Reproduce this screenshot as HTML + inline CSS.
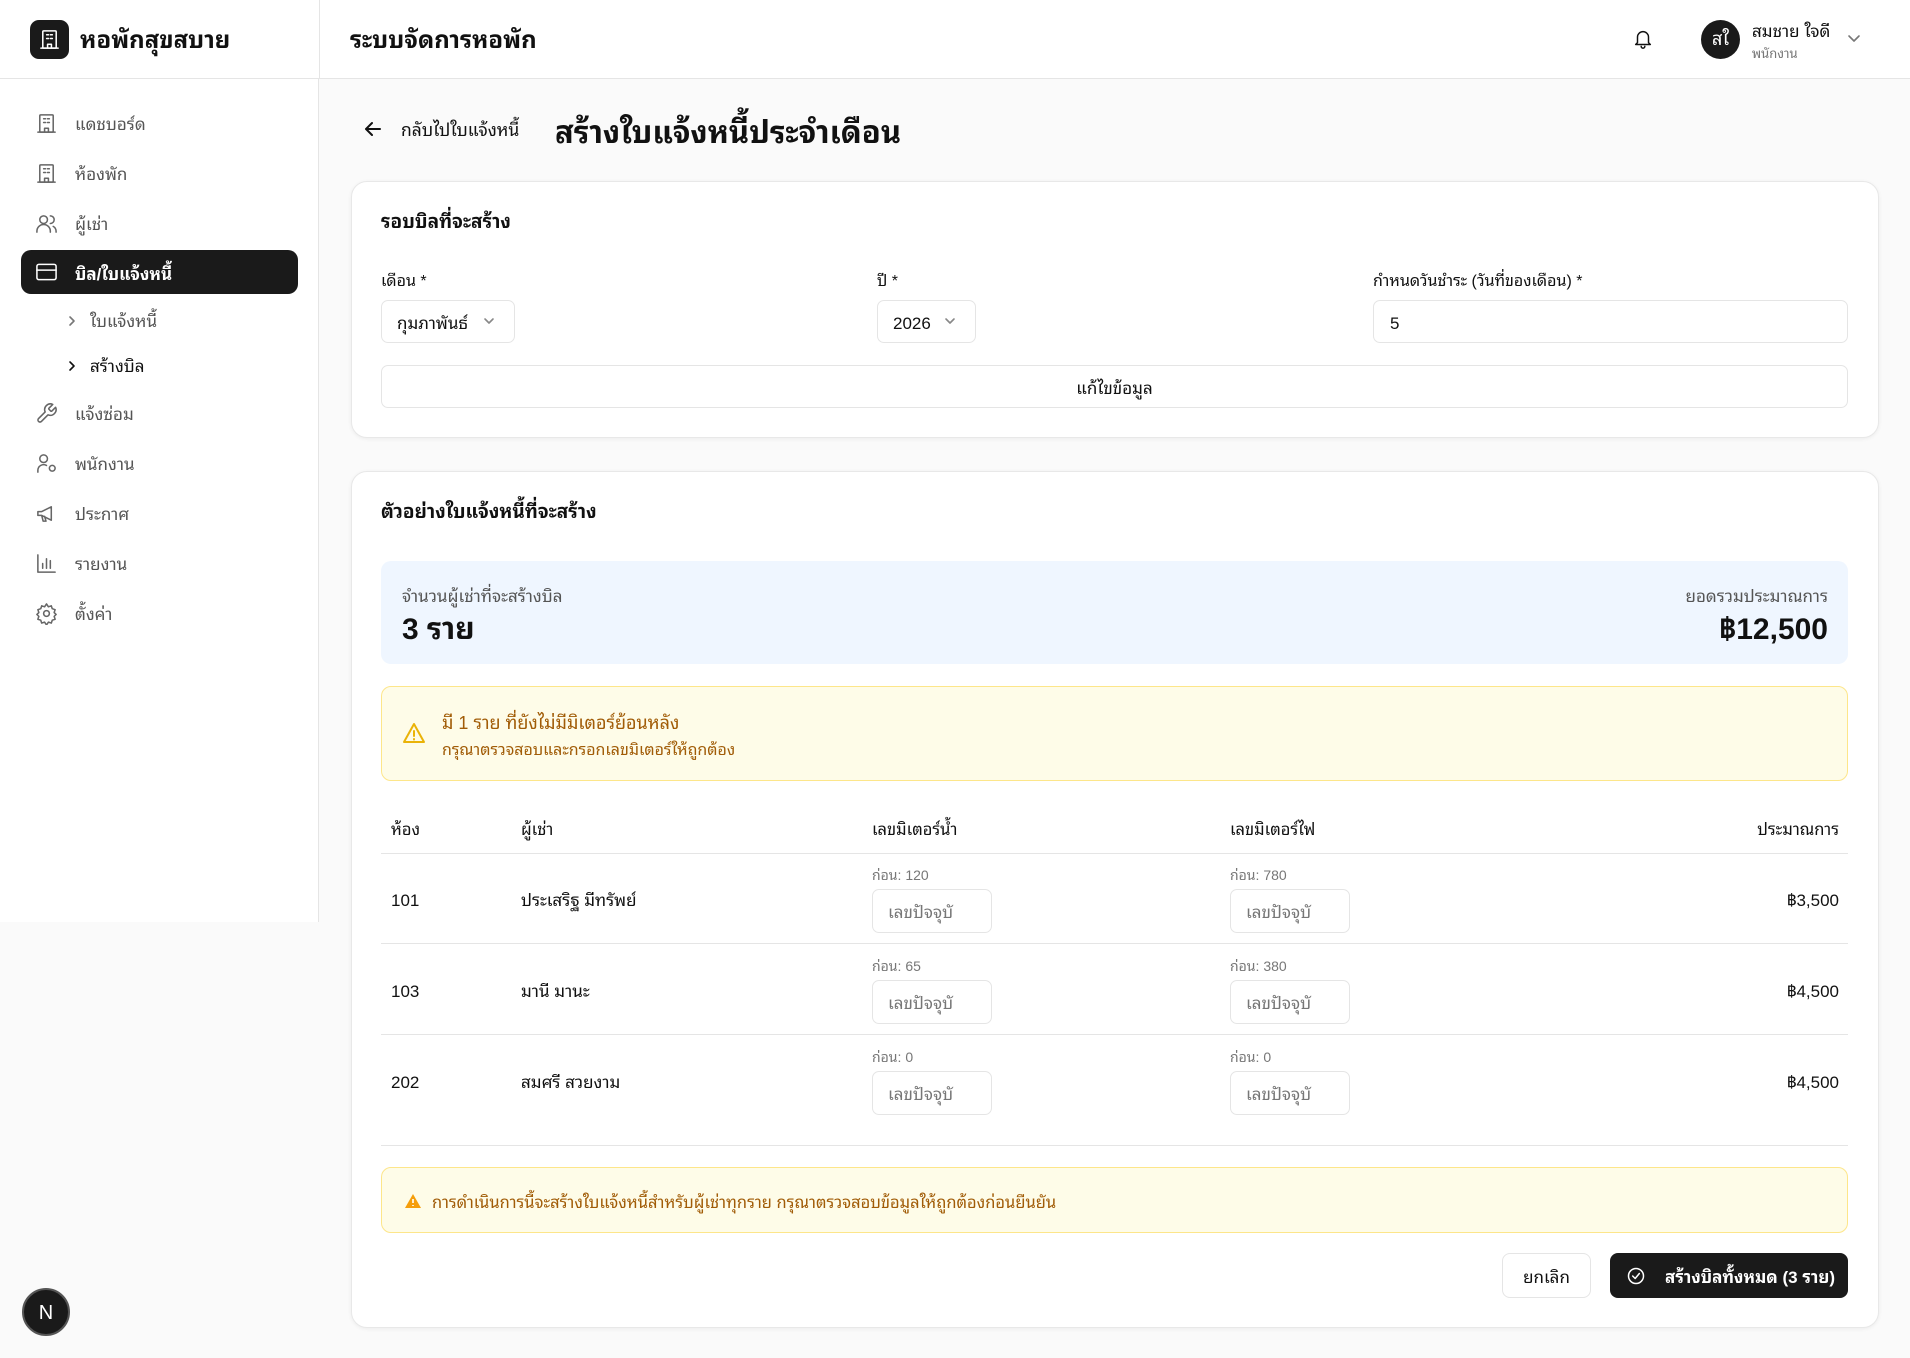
<!DOCTYPE html>
<html><head><meta charset="utf-8"><style>
*{box-sizing:border-box;margin:0;padding:0}
body{width:1910px;height:1358px;background:#fafafa;font-family:"Liberation Sans","Noto Sans Thai Looped","Tahoma","Loma","Garuda","Sawasdee","Norasi","Noto Sans Thai",sans-serif;color:#111;position:relative;overflow:hidden;line-height:1.25}
.a{position:absolute;white-space:nowrap;padding-top:2px}
.ic{position:absolute;fill:none;stroke:currentColor;stroke-width:1.6;stroke-linecap:round;stroke-linejoin:round}
.card{position:absolute;background:#fff;border:1px solid #e8e8e8;border-radius:16px;box-shadow:0 1px 4px rgba(0,0,0,.06)}
.box{position:absolute;border:1px solid #e5e5e5;border-radius:7px;background:#fff}
.nav{color:#555;font-size:17px}
.ph{font-size:17px;color:#777}
.sm{font-size:14px;color:#777}
.hl{position:absolute;left:381px;width:1467px;height:1px;background:#e5e5e5}
</style></head><body>
<div class="a" style="left:0;top:0;width:319px;height:922px;background:#fff;border-right:1px solid #e5e5e5"></div>
<div class="a" style="left:0;top:0;width:1910px;height:79px;background:#fff;border-bottom:1px solid #e5e5e5"></div>
<div class="a" style="left:319px;top:0;width:1px;height:79px;background:#e5e5e5"></div>
<div class="a" style="left:30px;top:20px;width:39px;height:39px;background:#1a1a1a;border-radius:9px"></div>
<svg class="ic" style="left:38px;top:28px;color:#fff" width="23" height="23" viewBox="0 0 24 24"><rect x="5" y="3" width="14" height="18" rx="1"/><path d="M9 7h2M13 7h2M9 11h2M13 11h2M10 21v-4h4v4M3 21h18"/></svg>
<div class="a" style="left:80px;top:24px;font-size:24px;font-weight:bold">หอพักสุขสบาย</div>
<div class="a" style="left:350px;top:24px;font-size:24px;font-weight:bold">ระบบจัดการหอพัก</div>
<svg class="ic" style="left:1632px;top:28px" width="22" height="22" viewBox="0 0 24 24"><path d="M6 16V10a6 6 0 0 1 12 0v6l2 2H4z"/><path d="M10 20a2 2 0 0 0 4 0"/></svg>
<div class="a" style="left:1701px;top:20px;width:39px;height:39px;border-radius:50%;background:#1a1a1a;color:#fff;font-size:18px;text-align:center;line-height:35px">สใ</div>
<div class="a" style="left:1752px;top:19px;font-size:17px">สมชาย ใจดี</div>
<div class="a" style="left:1752px;top:44px;font-size:13px;color:#777">พนักงาน</div>
<svg class="ic" style="left:1847px;top:33px;color:#777" width="14" height="12" viewBox="0 0 14 12"><path d="M2 3l5 5 5-5"/></svg>

<svg class="ic" style="left:35px;top:112px;color:#666" width="23" height="23" viewBox="0 0 24 24"><rect x="5" y="3" width="14" height="18" rx="1"/><path d="M9 7h2M13 7h2M9 11h2M13 11h2M10 21v-4h4v4M3 21h18"/></svg>
<div class="a nav" style="left:75px;top:112px">แดชบอร์ด</div>
<svg class="ic" style="left:35px;top:162px;color:#666" width="23" height="23" viewBox="0 0 24 24"><rect x="5" y="3" width="14" height="18" rx="1"/><path d="M9 7h2M13 7h2M9 11h2M13 11h2M10 21v-4h4v4M3 21h18"/></svg>
<div class="a nav" style="left:75px;top:162px">ห้องพัก</div>
<svg class="ic" style="left:35px;top:212px;color:#666" width="23" height="23" viewBox="0 0 24 24"><circle cx="9" cy="8" r="4"/><path d="M2 21v-1a7 7 0 0 1 14 0v1M16 4a4 4 0 0 1 0 8M22 21v-1a6 6 0 0 0-3-5"/></svg>
<div class="a nav" style="left:75px;top:212px">ผู้เช่า</div>
<div class="a" style="left:21px;top:250px;width:277px;height:44px;background:#1a1a1a;border-radius:10px"></div>
<svg class="ic" style="left:35px;top:262px;color:#fff" width="23" height="20" viewBox="0 0 24 20"><rect x="2" y="2" width="20" height="16" rx="2"/><path d="M2 8h20"/></svg>
<div class="a" style="left:75px;top:262px;font-size:17px;color:#fff;font-weight:bold">บิล/ใบแจ้งหนี้</div>
<svg class="ic" style="left:67px;top:315px;color:#777" width="10" height="12" viewBox="0 0 10 12"><path d="M3 2l4 4-4 4"/></svg>
<div class="a nav" style="left:90px;top:309px">ใบแจ้งหนี้</div>
<svg class="ic" style="left:67px;top:360px;color:#111" width="10" height="12" viewBox="0 0 10 12"><path d="M3 2l4 4-4 4"/></svg>
<div class="a" style="left:90px;top:354px;font-size:17px;color:#111">สร้างบิล</div>
<svg class="ic" style="left:35px;top:402px;color:#666" width="23" height="23" viewBox="0 0 24 24"><path d="M14.7 6.3a1 1 0 0 0 0 1.4l1.6 1.6a1 1 0 0 0 1.4 0l3.8-3.8a6 6 0 0 1-7.9 7.9l-6.9 6.9a2.1 2.1 0 0 1-3-3l6.9-6.9a6 6 0 0 1 7.9-7.9z"/></svg>
<div class="a nav" style="left:75px;top:402px">แจ้งซ่อม</div>
<svg class="ic" style="left:35px;top:452px;color:#666" width="23" height="23" viewBox="0 0 24 24"><circle cx="9" cy="7" r="4"/><path d="M3 21v-2a6 6 0 0 1 9-5"/><circle cx="18" cy="17" r="3"/></svg>
<div class="a nav" style="left:75px;top:452px">พนักงาน</div>
<svg class="ic" style="left:35px;top:502px;color:#666" width="23" height="23" viewBox="0 0 24 24"><path d="M3 10v4h4l10 5V5L7 10z M7 14l1.5 6h3L10 15"/></svg>
<div class="a nav" style="left:75px;top:502px">ประกาศ</div>
<svg class="ic" style="left:35px;top:552px;color:#666" width="23" height="23" viewBox="0 0 24 24"><path d="M3 3v18h18M8 17v-5M12 17V7M16 17v-8"/></svg>
<div class="a nav" style="left:75px;top:552px">รายงาน</div>
<svg class="ic" style="left:35px;top:602px;color:#666" width="23" height="23" viewBox="0 0 24 24"><circle cx="12" cy="12" r="3"/><path d="M12 2l2 3 3-1 1 3 3 1-1 3 2 2-2 2 1 3-3 1-1 3-3-1-2 3-2-3-3 1-1-3-3-1 1-3-2-2 2-2-1-3 3-1 1-3 3 1z"/></svg>
<div class="a nav" style="left:75px;top:602px">ตั้งค่า</div>
<div class="a" style="left:22px;top:1288px;width:48px;height:48px;border-radius:50%;background:#1a1a1a;border:2px solid #555;color:#fff;text-align:center;line-height:42px;font-size:20px">N</div>

<svg class="ic" style="left:363px;top:120px;stroke-width:2" width="20" height="18" viewBox="0 0 20 18"><path d="M17 9H3M9 3L3 9l6 6"/></svg>
<div class="a" style="left:401px;top:118px;font-size:17.5px">กลับไปใบแจ้งหนี้</div>
<div class="a" style="left:555px;top:112px;font-size:31px;font-weight:bold">สร้างใบแจ้งหนี้ประจำเดือน</div>

<div class="card" style="left:351px;top:181px;width:1528px;height:257px"></div>
<div class="a" style="left:381px;top:209px;font-size:19px;font-weight:bold">รอบบิลที่จะสร้าง</div>
<div class="a" style="left:381px;top:270px;font-size:16px">เดือน *</div>
<div class="a" style="left:877px;top:270px;font-size:16px">ปี *</div>
<div class="a" style="left:1373px;top:270px;font-size:16px">กำหนดวันชำระ (วันที่ของเดือน) *</div>
<div class="box" style="left:381px;top:300px;width:134px;height:43px"></div>
<div class="a" style="left:397px;top:311px;font-size:17px">กุมภาพันธ์</div>
<svg class="ic" style="left:483px;top:316px;color:#888" width="12" height="10" viewBox="0 0 12 10"><path d="M2 3l4 4 4-4"/></svg>
<div class="box" style="left:877px;top:300px;width:99px;height:43px"></div>
<div class="a" style="left:893px;top:311px;font-size:17px">2026</div>
<svg class="ic" style="left:944px;top:316px;color:#888" width="12" height="10" viewBox="0 0 12 10"><path d="M2 3l4 4 4-4"/></svg>
<div class="box" style="left:1373px;top:300px;width:475px;height:43px"></div>
<div class="a" style="left:1390px;top:311px;font-size:17px">5</div>
<div class="box" style="left:381px;top:365px;width:1467px;height:43px"></div>
<div class="a" style="left:381px;top:376px;width:1467px;text-align:center;font-size:17px">แก้ไขข้อมูล</div>

<div class="card" style="left:351px;top:471px;width:1528px;height:857px"></div>
<div class="a" style="left:381px;top:499px;font-size:19px;font-weight:bold">ตัวอย่างใบแจ้งหนี้ที่จะสร้าง</div>
<div class="a" style="left:381px;top:561px;width:1467px;height:103px;background:#eff6ff;border-radius:10px"></div>
<div class="a" style="left:402px;top:584px;font-size:17px;color:#555">จำนวนผู้เช่าที่จะสร้างบิล</div>
<div class="a" style="left:402px;top:609px;font-size:30px;font-weight:bold">3 ราย</div>
<div class="a" style="right:82px;top:584px;font-size:17px;color:#555">ยอดรวมประมาณการ</div>
<div class="a" style="right:82px;top:609px;font-size:30px;font-weight:bold">฿12,500</div>

<div class="a" style="left:381px;top:686px;width:1467px;height:95px;background:#fefce8;border:1px solid #fde68a;border-radius:10px"></div>
<svg class="ic" style="left:402px;top:721px;color:#eab308;stroke-width:2" width="24" height="24" viewBox="0 0 24 24"><path d="M12 3L2 21h20z M12 10v5M12 18v.5"/></svg>
<div class="a" style="left:442px;top:710px;font-size:18px;color:#a15c07">มี 1 ราย ที่ยังไม่มีมิเตอร์ย้อนหลัง</div>
<div class="a" style="left:442px;top:739px;font-size:16px;color:#a15c07">กรุณาตรวจสอบและกรอกเลขมิเตอร์ให้ถูกต้อง</div>

<div class="a" style="left:391px;top:818px;font-size:16.5px">ห้อง</div>
<div class="a" style="left:521px;top:818px;font-size:16.5px">ผู้เช่า</div>
<div class="a" style="left:872px;top:818px;font-size:16.5px">เลขมิเตอร์น้ำ</div>
<div class="a" style="left:1230px;top:818px;font-size:16.5px">เลขมิเตอร์ไฟ</div>
<div class="a" style="right:71px;top:818px;font-size:16.5px">ประมาณการ</div>
<div class="hl" style="top:853px"></div>

<div class="a" style="left:391px;top:888px;font-size:17px">101</div>
<div class="a" style="left:521px;top:888px;font-size:17px">ประเสริฐ มีทรัพย์</div>
<div class="a sm" style="left:872px;top:865px">ก่อน: 120</div>
<div class="a sm" style="left:1230px;top:865px">ก่อน: 780</div>
<div class="box" style="left:872px;top:889px;width:120px;height:44px"></div><div class="a ph" style="left:888px;top:900px">เลขปัจจุบั</div>
<div class="box" style="left:1230px;top:889px;width:120px;height:44px"></div><div class="a ph" style="left:1246px;top:900px">เลขปัจจุบั</div>
<div class="a" style="right:71px;top:888px;font-size:17px">฿3,500</div>
<div class="hl" style="top:943px"></div>

<div class="a" style="left:391px;top:979px;font-size:17px">103</div>
<div class="a" style="left:521px;top:979px;font-size:17px">มานี มานะ</div>
<div class="a sm" style="left:872px;top:956px">ก่อน: 65</div>
<div class="a sm" style="left:1230px;top:956px">ก่อน: 380</div>
<div class="box" style="left:872px;top:980px;width:120px;height:44px"></div><div class="a ph" style="left:888px;top:991px">เลขปัจจุบั</div>
<div class="box" style="left:1230px;top:980px;width:120px;height:44px"></div><div class="a ph" style="left:1246px;top:991px">เลขปัจจุบั</div>
<div class="a" style="right:71px;top:979px;font-size:17px">฿4,500</div>
<div class="hl" style="top:1034px"></div>

<div class="a" style="left:391px;top:1070px;font-size:17px">202</div>
<div class="a" style="left:521px;top:1070px;font-size:17px">สมศรี สวยงาม</div>
<div class="a sm" style="left:872px;top:1047px">ก่อน: 0</div>
<div class="a sm" style="left:1230px;top:1047px">ก่อน: 0</div>
<div class="box" style="left:872px;top:1071px;width:120px;height:44px"></div><div class="a ph" style="left:888px;top:1082px">เลขปัจจุบั</div>
<div class="box" style="left:1230px;top:1071px;width:120px;height:44px"></div><div class="a ph" style="left:1246px;top:1082px">เลขปัจจุบั</div>
<div class="a" style="right:71px;top:1070px;font-size:17px">฿4,500</div>
<div class="hl" style="top:1145px"></div>

<div class="a" style="left:381px;top:1167px;width:1467px;height:66px;background:#fefce8;border:1px solid #fde68a;border-radius:10px"></div>
<svg class="a" style="left:404px;top:1193px;padding:0" width="18" height="16" viewBox="0 0 18 16"><path d="M9 1L1 15h16z" fill="#f59e0b"/><path d="M9 6v4M9 12v1" stroke="#fff" stroke-width="1.6"/></svg>
<div class="a" style="left:432px;top:1191px;font-size:16.5px;color:#a15c07">การดำเนินการนี้จะสร้างใบแจ้งหนี้สำหรับผู้เช่าทุกราย กรุณาตรวจสอบข้อมูลให้ถูกต้องก่อนยืนยัน</div>

<div class="box" style="left:1502px;top:1253px;width:89px;height:45px;border-radius:8px"></div>
<div class="a" style="left:1502px;top:1265px;width:89px;text-align:center;font-size:17px">ยกเลิก</div>
<div class="a" style="left:1610px;top:1253px;width:238px;height:45px;background:#1a1a1a;border-radius:8px"></div>
<svg class="ic" style="left:1626px;top:1266px;color:#fff;stroke-width:1.8" width="20" height="20" viewBox="0 0 24 24"><circle cx="12" cy="12" r="9"/><path d="M8 12l3 3 5-6"/></svg>
<div class="a" style="left:1665px;top:1265px;font-size:17px;color:#fff;font-weight:bold">สร้างบิลทั้งหมด (3 ราย)</div>
</body></html>
